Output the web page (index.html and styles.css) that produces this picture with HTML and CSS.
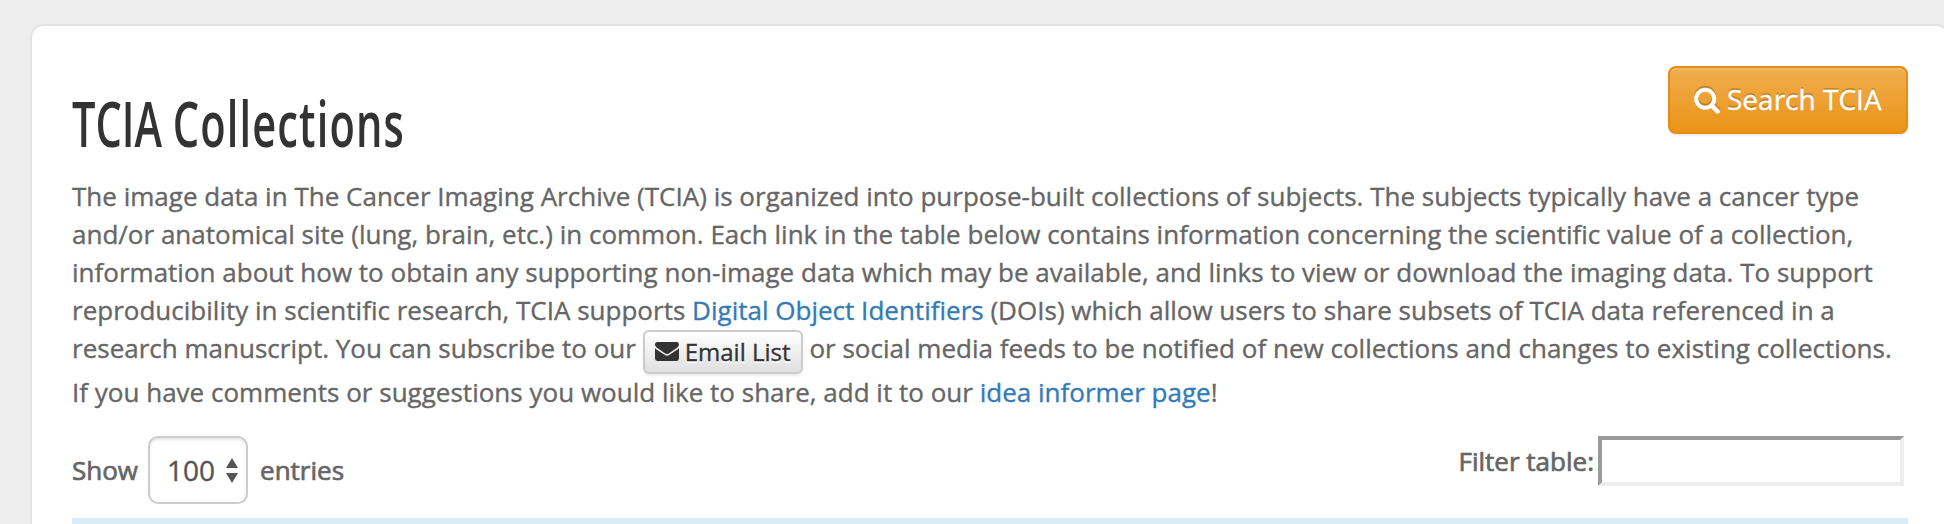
FILE: index.html
```html
<!DOCTYPE html>
<html lang="en">
<head>
<meta charset="utf-8">
<title>TCIA Collections</title>
<link rel="stylesheet" href="styles.css">
</head>
<body>
<main class="card">
  <header class="head">
    <h1 class="title"><span class="title-text">TCIA <span class="title-word">Collections</span></span></h1>
    <a class="search-btn"><svg class="search-icon" viewBox="0 0 26 27"><circle cx="11.2" cy="11.7" r="9" fill="none" stroke="currentColor" stroke-width="4"/><path d="M17.6 18.4l6 6" fill="none" stroke="currentColor" stroke-width="4.6" stroke-linecap="round"/></svg><span class="search-label">Search TCIA</span></a>
  </header>
  <p class="intro">The image data in The Cancer Imaging Archive (TCIA) is organized into purpose-built collections of subjects. The subjects typically have a cancer type<br>and/or anatomical site (lung, brain, etc.) in common. Each link in the table below contains information concerning the scientific value of a collection,<br>information about how to obtain any supporting non-image data which may be available, and links to view or download the imaging data. To support<br>reproducibility in scientific research, TCIA supports <a class="link">Digital Object Identifiers</a> (DOIs) which allow users to share subsets of TCIA data referenced in a<br>research manuscript. You can subscribe to our <a class="email-btn"><svg class="mail-icon" viewBox="0 0 24 19"><path d="M2.4 0h19.2A2.4 2.4 0 0 1 24 2.4c0 1.500-1 2.700-2.300 3.600l-7.200 5c-.8.600-1.600 1.100-2.500 1.100s-1.700-.5-2.500-1.100L2.300 6C1.200 5.200 0 3.900 0 2.600 0 1.100.9 0 2.400 0z" fill="currentColor"/><path d="M0 6.100c.4.500.9.900 1.500 1.300l6.900 4.700c1.100.8 2.300 1.700 3.600 1.700s2.500-.9 3.600-1.700l6.900-4.700c.6-.4 1.100-.8 1.500-1.300v10.500A2.400 2.400 0 0 1 21.600 19H2.400A2.400 2.400 0 0 1 0 16.600z" fill="currentColor"/></svg><span>Email List</span></a> or social media feeds to be notified of new collections and changes to existing collections.<br>If you have comments or suggestions you would like to share, add it to our <a class="link">idea informer page</a>!</p>
  <div class="controls">
    <div class="length"><span>Show</span><span class="select"><span>100</span><svg class="arrows" viewBox="0 0 12 25"><path d="M6 0l6 10H0zM6 25l6-10H0z" fill="currentColor"/></svg></span><span>entries</span></div>
    <label class="filter"><span>Filter table:</span><input class="filter-input" type="text"></label>
  </div>
  <div class="table-head"></div>
</main>
</body>
</html>
```
FILE: styles.css
```css
* { box-sizing: border-box; }
html { overflow: hidden; }
body {
  margin: 0;
  height: 524px;
  overflow: hidden;
  background: #ededed;
  color: #666;
  font: 26px/38px "Open Sans", sans-serif;
  letter-spacing: .008px;
  -webkit-text-stroke: .35px currentColor;
}
.card {
  width: 1920px;
  height: 500px;
  margin: 24px 0 0 30px;
  padding: 40px 40px 0;
  background: #fff;
  border: 2px solid #e3e3e3;
  border-bottom: 0;
  border-radius: 14px 14px 0 0;
}
.head {
  display: flex;
  justify-content: space-between;
  align-items: flex-start;
  height: 111px;
}
.title {
  margin: 17px 0 0;
  width: 340px;
  white-space: nowrap;
  font-size: 63px;
  line-height: 80px;
  font-weight: 600;
  color: #333;
  -webkit-text-stroke: 0;
}
.title-text {
  display: inline-block;
  transform: scaleX(.66);
  transform-origin: 0 0;
}
.title-word { letter-spacing: 1.7px; }
.search-btn {
  display: flex;
  align-items: center;
  gap: 7px;
  width: 240px;
  height: 68px;
  padding: 0 0 0 24px;
  border: 2px solid #e38d13;
  border-radius: 8px;
  background: linear-gradient(#f0ad4e, #eb9316);
  box-shadow: inset 0 2px 0 rgba(255,255,255,.15), 0 2px 2px rgba(0,0,0,.075);
  color: #fff;
  font-size: 28px;
  white-space: nowrap;
  text-shadow: 0 -2px 0 rgba(0,0,0,.2);
}
.search-icon { width: 26px; height: 27px; filter: drop-shadow(0 -2px 0 rgba(0,0,0,.2)); }
.search-label { padding-bottom: 2px; }
.intro { margin: 0; height: 259px; white-space: nowrap; }
.link { color: #337ab7; }
.email-btn {
  display: inline-flex;
  align-items: center;
  gap: 6px;
  width: 160px;
  height: 44px;
  margin: -6px 0 -1px;
  padding-left: 10px;
  vertical-align: -3px;
  border: 2px solid #ccc;
  border-radius: 6px;
  background: linear-gradient(#fff, #e0e0e0);
  box-shadow: 0 2px 2px rgba(0,0,0,.075);
  color: #333;
  font-size: 24px;
  line-height: 36px;
  text-shadow: 0 2px 0 #fff;
}
.mail-icon { width: 24px; height: 19px; }
.controls {
  display: flex;
  justify-content: space-between;
  align-items: flex-start;
  height: 82px;
  padding-right: 4px;
  -webkit-text-stroke: .7px currentColor;
}
.length { display: flex; align-items: center; }
.select {
  display: flex;
  align-items: center;
  gap: 11px;
  width: 100px;
  height: 68px;
  margin: 0 12px 0 10px;
  padding-left: 17px;
  border: 2px solid #ccc;
  border-radius: 10px;
  box-shadow: inset 0 2px 3px rgba(0,0,0,.1);
  color: #555;
  font-size: 28px;
  -webkit-text-stroke: .35px currentColor;
}
.arrows { width: 12px; height: 25px; }
.filter { display: flex; align-items: center; gap: 4px; }
.filter-input {
  width: 306px;
  height: 50px;
  background: #fff;
  border: 4px solid;
  border-color: #9a9a9a #eee #eee #9a9a9a;
}
.table-head { height: 6px; background: #d9edf7; }
```
